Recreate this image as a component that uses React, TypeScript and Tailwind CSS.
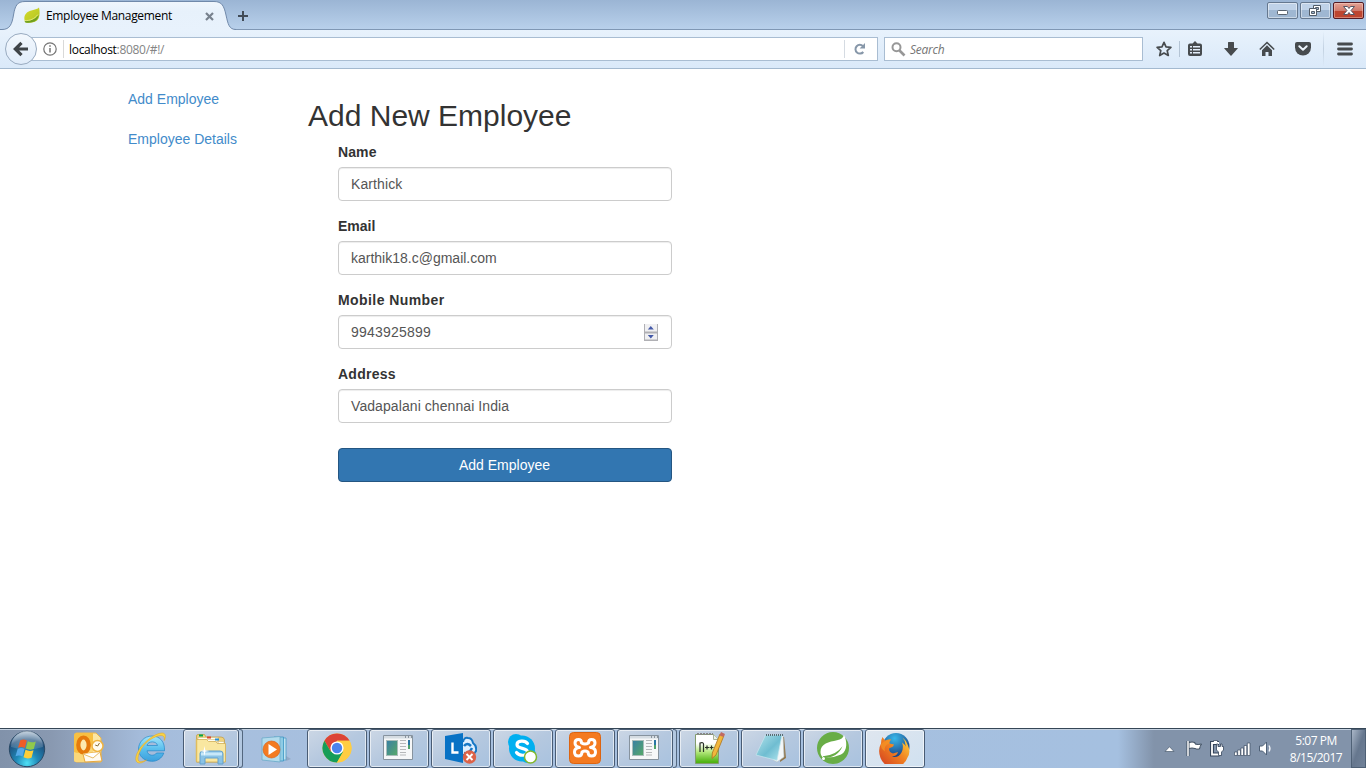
import React from 'react';

const uiFont = "font-['Open_Sans','Noto_Sans',sans-serif]";

function LeafIcon() {
  return (
    <svg width="18" height="18" viewBox="0 0 18 18">
      <defs>
        <linearGradient id="leaf" x1="0" y1="0" x2="1" y2="1">
          <stop offset="0" stopColor="#d3d92b" />
          <stop offset="0.6" stopColor="#c0cd26" />
          <stop offset="1" stopColor="#b0c425" />
        </linearGradient>
      </defs>
      <path d="M16 .5C13.500 3.200 7 3 4 5.500C.8 8.500 .8 12 2.500 15.500C8 16.500 13.500 15.500 15.500 11.500C17 8.500 16.800 4 16 .5Z" fill="url(#leaf)" />
      <path d="M1.500 14C7 14.500 12 12.500 15.600 8C15.500 13 11 16.500 2.500 15.500Z" fill="#6f9f1f" />
      <path d="M1.500 13.600C7 13.800 11.500 12 14.800 7.600" stroke="#e8ee8b" strokeWidth=".8" fill="none" />
    </svg>
  );
}

function WindowButtons() {
  const base = 'h-[17px] rounded-[2px] border border-[#65788f] bg-linear-to-b from-[#bfd2e8] from-50% to-[#9fb7d2] to-50% shadow-[inset_0_0_0_1px_rgba(255,255,255,.45)]';
  return (
    <div className="ml-auto flex gap-0.5 pt-0.5 pr-0.5">
      <div className={'w-[31px] ' + base}>
        <svg width="29" height="15"><rect x="9.500" y="7.500" width="10" height="4" rx="1" fill="#fff" stroke="#59636f" /></svg>
      </div>
      <div className={'w-[31px] ' + base}>
        <svg width="29" height="15" fill="#fff" stroke="#535d69">
          <path d="M12.500 2.500h7v6h-7z" /><path d="M14.500 4.500h3v2h-3z" fill="#9eb4cd" />
          <path d="M8.500 5.500h7v7h-7z" /><path d="M10.500 8.500h3v2h-3z" fill="#9eb4cd" />
        </svg>
      </div>
      <div className="h-[17px] w-[31px] rounded-[2px] border border-[#541b24] bg-linear-to-b from-[#e3a296] from-0% via-[#d07b6d] via-50% to-[#bd4530] to-55% shadow-[inset_0_0_0_1px_rgba(255,225,215,.4)]">
        <svg width="29" height="15"><path d="M9.500 3.500h4l1.500 2 1.500-2h4l-3.500 4 3.500 4h-4l-1.500-2-1.500 2h-4l3.500-4z" fill="#fff" stroke="#565665" /></svg>
      </div>
    </div>
  );
}

function TabStrip() {
  return (
    <div className="flex h-[30px] border-b border-[#7f97b4] bg-linear-to-b from-[#9bb5d4] to-[#b8d0eb]">
      <div className="relative h-[30px] w-[236px] shrink-0">
        <svg className="absolute inset-0" width="236" height="30">
          <defs>
            <linearGradient id="tabfill" x1="0" y1="0" x2="0" y2="1"><stop offset="0" stopColor="#f0f6fc" /><stop offset=".35" stopColor="#e7f1fb" /><stop offset="1" stopColor="#e8f2fc" /></linearGradient>
          </defs>
          <path d="M0 30V29.500H2C10 29.500 12 24 13.500 15C15 6 17 1.500 25 1.500H214C222 1.500 224 6 226 15C228 24 229 29.500 236 29.500V30Z" fill="url(#tabfill)" />
          <path d="M0 29.500H2C10 29.500 12 24 13.500 15C15 6 17 1.500 25 1.500H214C222 1.500 224 6 226 15C228 24 229 29.500 236 29.500" fill="none" stroke="#7089aa" />
        </svg>
        <div className="relative flex h-full items-center pl-[23px]">
          <div className="mt-0.5"><LeafIcon /></div>
          <span className="ml-[5px] mt-px w-[158px] text-[12px] tracking-[-0.33px] whitespace-nowrap text-black">Employee Management</span>
          <svg className="mt-[2px] ml-px" width="9" height="9" viewBox="0 0 9 9"><path d="M1 1l7 7M8 1l-7 7" stroke="#77818d" strokeWidth="2.200" /></svg>
        </div>
      </div>
      <svg className="mt-[10px] ml-[1px]" width="12" height="12"><path d="M6 1v10M1 6h10" stroke="#414b57" strokeWidth="2" /></svg>
      <WindowButtons />
    </div>
  );
}

function ToolIcons() {
  return (
    <div className="flex h-full items-center text-[#474b4e]">
      <svg width="16" height="16" className="ml-[13px]"><path d="M8 1.300l2 4.500 4.900.5-3.700 3.300 1.100 4.900L8 12l-4.300 2.500 1.100-4.900L1.100 6.300 6 5.800z" fill="none" stroke="currentColor" strokeWidth="1.700" strokeLinejoin="round" /></svg>
      <div className="ml-[7px] h-4 w-px bg-[#b4c4d5]" />
      <svg width="16" height="16" className="ml-[7px]">
        <path d="M3 2.500h2.500L8 0l2.500 2.500H13q2 0 2 2V13q0 2-2 2H3q-2 0-2-2V4.500q0-2 2-2z" fill="currentColor" />
        <path d="M3 5h2v1.600H3zM6 5h7v1.600H6zM3 8h2v1.600H3zM6 8h7v1.600H6zM3 11h2v1.600H3zM6 11h7v1.600H6z" fill="#e4eefa" />
      </svg>
      <svg width="16" height="16" className="ml-5"><path d="M5 1.500q0-.5.500-.5h5q.5 0 .5.500V7h3.500q.7 0 .2.600L8.500 14.500q-.5.500-1 0L1.300 7.600Q.8 7 1.500 7H5z" fill="currentColor" /></svg>
      <svg width="16" height="16" className="ml-5"><path d="M.8 8.500L8 1.500l7.200 7" fill="none" stroke="currentColor" strokeWidth="1.500" /><path d="M8 4.300l5 5V15H9.500v-4h-3v4H3V9.300z" fill="currentColor" /></svg>
      <svg width="16" height="16" className="ml-5"><path d="M2 1h12q2 0 2 2v3.500a8 8 0 0 1-16 0V3q0-2 2-2z" fill="currentColor" /><path d="M4.300 5.300L8 8.800l3.700-3.500" fill="none" stroke="#edf4fb" strokeWidth="2" strokeLinecap="round" strokeLinejoin="round" /></svg>
      <div className="ml-[12px] h-[36px] w-px bg-linear-to-b from-transparent via-[#c2d1e1] to-transparent" />
      <svg width="16" height="14" className="ml-[13px]"><path d="M1.500 2h13M1.500 7h13M1.500 12h13" stroke="currentColor" strokeWidth="2.800" strokeLinecap="round" /></svg>
    </div>
  );
}

function Toolbar() {
  return (
    <div className="flex h-[39px] items-center border-b border-[#a3b9cf] bg-linear-to-b from-[#e8f2fc] to-[#dae9f9]">
      <div className="relative z-10 ml-[5px] flex size-8 shrink-0 items-center justify-center rounded-full border border-[#99abc0] bg-linear-to-b from-[#f3f8fd] to-[#e0ecfa]">
        <svg width="16" height="16"><path d="M15 8H3M8.500 1.800L2.300 8l6.200 6.200" fill="none" stroke="#3f4448" strokeWidth="3.200" /></svg>
      </div>
      <div className="-ml-[6px] flex h-6 w-[847px] shrink-0 items-center border border-[#a9bdd2] bg-white">
        <svg width="14" height="14" className="ml-[11px] shrink-0"><circle cx="7" cy="7" r="6.200" fill="none" stroke="#747474" strokeWidth="1.200" /><path d="M7 6v4.500M7 3.300v1.500" stroke="#747474" strokeWidth="1.500" /></svg>
        <div className="ml-[6px] h-[18px] w-px bg-[#d9d9d9]" />
        <span className="ml-[5px] mt-px text-[12px] tracking-[-0.3px] text-black">localhost<span className="text-[#848484]">:8080/#!/</span></span>
        <div className="ml-auto h-[18px] w-px bg-[#d5dbe2]" />
        <svg width="12" height="12" viewBox="0 0 12 12" className="mr-[11px] ml-[9px]"><path d="M9.300 9A4.400 4.400 0 1 1 9 3.100" fill="none" stroke="#8797a9" strokeWidth="2" /><path d="M11 0v5.500H5.600z" fill="#8797a9" /></svg>
      </div>
      <div className="ml-1.5 flex h-6 w-[259px] shrink-0 items-center border border-[#a9bdd2] bg-white">
        <svg width="15" height="15" className="ml-[6px]"><circle cx="5.500" cy="5.300" r="4" fill="none" stroke="#979797" strokeWidth="2" /><path d="M8.500 8.500l5 5" stroke="#979797" strokeWidth="2.600" /></svg>
        <span className="ml-[4px] mt-px text-[12px] tracking-[-0.25px] text-[#757575] italic">Search</span>
      </div>
      <ToolIcons />
    </div>
  );
}

type FieldProps = { label: string; value: string; spinner?: boolean; labelClass?: string; valueClass?: string };

function Field({ label, value, spinner, labelClass = '', valueClass = '' }: FieldProps) {
  return (
    <div className="mb-[15px]">
      <label className={'mb-[5px] block text-[14px] leading-5 font-bold ' + labelClass}>{label}</label>
      <div className="flex h-[34px] items-center justify-between rounded-[4px] border border-[#ccc] px-3 text-[14px] text-[#555] shadow-[inset_0_1px_1px_rgba(0,0,0,.075)]">
        <span className={valueClass}>{value}</span>
        {spinner && (
          <svg width="14" height="17" className="mr-px">
            <path d="M0 0h14v17H0z" fill="#b0b0b4" />
            <path d="M1 0h12v7.500H1zM1 9.500h12v6H1z" fill="#f0f0f2" />
            <path d="M3.800 5.500h6L6.800 2zM3.800 11h6l-3 3.500z" fill="#4459a8" />
          </svg>
        )}
      </div>
    </div>
  );
}

function Page() {
  return (
    <main className="flex h-[659px] bg-white font-['Liberation_Sans',Arial,sans-serif] text-[14px] leading-5 text-[#333]">
      <nav className="ml-[128px] flex w-[180px] flex-col gap-5 pt-5 text-[#428bca]">
        <a>Add Employee</a>
        <a>Employee Details</a>
      </nav>
      <section className="w-[364px]">
        <h2 className="mt-[30px] mb-[10px] text-[30px] leading-[33px]">Add New Employee</h2>
        <form className="pl-[30px]">
          <Field label="Name" value="Karthick" labelClass="tracking-[0.1px]" valueClass="tracking-[0.1px]" />
          <Field label="Email" value="karthik18.c@gmail.com" />
          <Field label="Mobile Number" value="9943925899" spinner labelClass="tracking-[0.42px]" valueClass="tracking-[0.22px]" />
          <Field label="Address" value="Vadapalani chennai India" labelClass="tracking-[0.25px]" valueClass="tracking-[0.08px]" />
          <button type="button" className="mt-[10px] h-[34px] w-full rounded-[4px] border border-[#245682] bg-[#3276b1] pr-px text-white">Add Employee</button>
        </form>
      </section>
    </main>
  );
}

const StartOrb = () => (
  <svg width="40" height="40" viewBox="0 0 40 40">
    <defs>
      <radialGradient id="orb" cx=".5" cy=".9" r=".9"><stop offset="0" stopColor="#4fe0f5" /><stop offset=".35" stopColor="#2089b8" /><stop offset=".75" stopColor="#1f4f7c" /><stop offset="1" stopColor="#7e9cb9" /></radialGradient>
      <linearGradient id="orbShine" x1="0" y1="0" x2="0" y2="1"><stop offset="0" stopColor="#fff" stopOpacity=".55" /><stop offset="1" stopColor="#fff" stopOpacity=".1" /></linearGradient>
    </defs>
    <circle cx="20" cy="20" r="17.700" fill="url(#orb)" stroke="#294966" />
    <path d="M4 18a16 16 0 0 1 32 0Q20 23 4 18z" fill="url(#orbShine)" />
    <path d="M13.300 11.200q3.500-1.700 6.500.3l-2 7.500q-3-2-6.800-.3z" fill="#ee5d27" />
    <path d="M20.800 12.200q4 2 8 .2l-2 7.500q-4 1.700-8-.4z" fill="#90c94c" />
    <path d="M10.700 19.800q4-1.700 6.800.3l-2 7.500q-3-2-7-.4z" fill="#55a9e8" />
    <path d="M18.500 20.800q4 2 8 .4l-2 7.500q-4 1.700-8-.4z" fill="#fdce38" />
  </svg>
);

const Outlook = () => (
  <svg width="32" height="32" viewBox="0 0 32 32" className="-mt-0.5">
    <path d="M3 1h20l5 5v24H3z" fill="#fce7a4" stroke="#eeb649" />
    <path d="M1 3q0-2 2-2h17v29H3q-2 0-2-2z" fill="#f8c042" />
    <path d="M1 20Q10 24 20 12v18H3q-2 0-2-2z" fill="#fbd87a" />
    <ellipse cx="10.500" cy="13" rx="5.200" ry="7.500" fill="#fdeab0" stroke="#e57a0c" strokeWidth="4.200" />
    <path d="M10 22l17-2 2 9-17 1z" fill="#fffaf0" stroke="#e9a83c" /><path d="M10 22l10 4 7-6" fill="#fff" stroke="#e7bb66" />
    <circle cx="24.500" cy="14" r="5.500" fill="#fffbed" stroke="#f0b33f" strokeWidth="1.500" />
    <path d="M26.500 11l-1.800 3-2.500-1" stroke="#8a6a2e" fill="none" />
  </svg>
);

const Explorer = () => (
  <svg width="34" height="32" viewBox="0 0 34 32">
    <path d="M2.500 3q0-1.500 1.500-1.500h6.500L12 4h15q3 0 3.500 3v22h-28z" fill="#efd27c" stroke="#c2a04c" strokeWidth=".8" />
    <path d="M4 4.500h20v6H4zM12 6.500h12v6H12zM20 8.500h10v6H20z" fill="#fffdf0" stroke="#d3bd79" strokeWidth=".6" />
    <rect x="5" y="1.500" width="4" height="2" fill="#00a849" /><rect x="13" y="3.500" width="4" height="2" fill="#dc4930" /><rect x="21" y="5.500" width="4" height="2" fill="#2990d8" />
    <path d="M2.500 6.500h10l2 2h7l2 2h8V29h-29z" fill="#f9e7a0" stroke="#d0ae55" strokeWidth=".8" />
    <path d="M2.500 6.500v22" stroke="#e0bd5c" strokeWidth="1.500" />
    <path d="M6 31V20.500q0-2.500 3-2.500h17q3 0 3 2.500V31h-5v-6H11v6z" fill="#8ac3e6" stroke="#64a1cd" />
    <path d="M7 19.500h21v3H7z" fill="#d2eefb" opacity=".85" />
    <path d="M10.500 13l.8 4.200 4.200.8-4.200.8-.8 4.200-.8-4.200-4.200-.8 4.200-.8z" fill="#fff" />
  </svg>
);

const MediaPlayer = () => (
  <svg width="32" height="32" viewBox="0 0 32 32">
    <path d="M17 5h10v22H17z" fill="#c2e3f1" stroke="#4e9fc9" strokeWidth=".8" /><path d="M15 4h9.500v24H15z" fill="#8fcce5" stroke="#3c96c3" strokeWidth=".8" />
    <path d="M3 5l18-1.500V29L3 27z" fill="#b3dcec" stroke="#6cabc9" strokeWidth=".8" />
    <circle cx="12.500" cy="16.500" r="8.500" fill="#f37b21" stroke="#d95c15" strokeWidth=".6" /><path d="M9.500 11l8.500 5.500L9.500 22z" fill="#fff" />
    <path d="M27 23l5 3-5 2z" fill="#758ba5" opacity=".4" />
  </svg>
);

const Chrome = () => (
  <svg width="30" height="30" viewBox="0 0 30 30" className="-mt-px">
    <circle cx="15" cy="15" r="14.500" fill="#ffcd42" />
    <path d="M2.440 7.750A14.500 14.500 0 0 1 27.560 7.750H15L8.700 18.600z" fill="#dc4437" />
    <path d="M2.440 7.750A14.500 14.500 0 0 0 15 29.500L21.300 18.600 8.700 18.600z" fill="#159d58" />
    <path d="M15 7.750h12.560A14.500 14.500 0 0 1 15 29.500L21.300 18.600z" fill="#ffcd42" />
    <circle cx="15" cy="15" r="6.600" fill="#fff" /><circle cx="15" cy="15" r="5.200" fill="#4a83ed" />
  </svg>
);

const WindowApp = () => (
  <svg width="30" height="26" viewBox="0 0 30 26" className="mr-0.5 -mt-[3px]">
    <defs><linearGradient id="winapp" x1="0" y1="0" x2="1" y2="1"><stop stopColor="#397fa5" /><stop offset="1" stopColor="#57a967" /></linearGradient></defs>
    <path d="M.5 1.500h29v24H.5z" fill="#f6f7f8" stroke="#87939e" /><path d="M1 2h28v2.500H1z" fill="#d5dce2" />
    <path d="M22 3h1M25 3h1M28 3h1" stroke="#3d4b5a" />
    <rect x="3.500" y="6.500" width="11" height="15" fill="url(#winapp)" stroke="#a8bcb9" /><path d="M17 6.500h6M17 9.500h6M17 12.500h6M17 15.500h6M17 18.500h6M17 21h6" stroke="#b6b8ba" />
    <rect x="25" y="6" width="2" height="9" fill="#2875a4" /><path d="M25 11h2v4h-2z" fill="#4fa36a" />
  </svg>
);

const Lync = () => (
  <svg width="32" height="32" viewBox="0 0 32 32" className="-mt-0.5">
    <path d="M18 10q1-5 5-4 4 0 5 5 4 3 3 8l-3 4H18" fill="#dceeff" stroke="#1677c5" strokeWidth="2" />
    <path d="M19 14q3-4 7 0M19 21q5 1 8-5" stroke="#1677c5" strokeWidth="2.500" fill="none" />
    <path d="M0 4l18-3v30L0 27z" fill="#0872c5" /><path d="M7.500 10.500v10h6" fill="none" stroke="#fff" strokeWidth="2.400" />
    <circle cx="24.500" cy="25" r="6.700" fill="#dc6248" /><path d="M21.500 22l6 6m0-6l-6 6" stroke="#fff" strokeWidth="1.900" />
  </svg>
);

const Skype = () => (
  <svg width="32" height="32" viewBox="0 0 32 32">
    <circle cx="9" cy="9" r="8" fill="#00aff0" /><circle cx="21" cy="22" r="8" fill="#00aff0" /><circle cx="15" cy="15.500" r="13" fill="#00aff0" />
    <path d="M20.500 10.500C18 7 10 7.500 10 11.700c0 4.800 10.500 2.500 10.500 7.300 0 4-8 4.500-11 .5" fill="none" stroke="#fff" strokeWidth="3.200" strokeLinecap="round" />
    <circle cx="23.500" cy="24" r="6" fill="#fff" stroke="#82b72c" strokeWidth="1.500" />
  </svg>
);

const Xampp = () => (
  <svg width="32" height="32" viewBox="0 0 32 32" className="-mt-0.5">
    <rect x=".5" y=".5" width="31" height="31" rx="4" fill="#f47a20" stroke="#dc6411" />
    <path d="M10.500 15.500Q6 14.500 6 11q0-3.500 3.500-3.500 3 0 3 3.500 3.500 2 7 0 0-3.500 3-3.500Q26 7.500 26 11q0 3.500-4.500 4.500Q26.500 16 26.500 20t-4 4q-3.500 0-3.500-4-3-2-6 0 0 4-3.500 4-4 0-4-4t5-4.500z" fill="none" stroke="#fff" strokeWidth="3" strokeLinejoin="round" />
  </svg>
);

const Notepadpp = () => (
  <svg width="32" height="34" viewBox="0 0 32 34" className="-mt-px">
    <defs><linearGradient id="npp" x1="0" y1="0" x2="0" y2="1"><stop offset=".3" stopColor="#fff" /><stop offset=".6" stopColor="#b4e87c" /><stop offset=".95" stopColor="#4fb313" /></linearGradient></defs>
    <path d="M2.500 3.500h18l5 5v24h-23z" fill="url(#npp)" stroke="#829c6c" /><path d="M20.500 3.500v5h5" fill="#eef2e8" stroke="#a8b39c" /><path d="M4 3h16" stroke="#888" strokeDasharray="2 1" strokeWidth="2" />
    <path d="M7 21v-9q3.500-1 3.500 1v8M12 16.500h4M14 14.500v4M16.500 16.500h4M18.500 14.500v4" fill="none" stroke="#283126" strokeWidth="1.200" />
    <path d="M27 3l4 1.500L23 24l-4 3.500.3-5.500z" fill="#f2b73c" stroke="#ad7420" strokeWidth=".8" /><path d="M28 1l4 2-1.500 3-3.800-1.500z" fill="#c16961" />
  </svg>
);

const Notepad = () => (
  <svg width="32" height="30" viewBox="0 0 32 30" className="-mt-px">
    <defs><linearGradient id="note" x1="0" y1="0" x2="1" y2="1"><stop stopColor="#b5e3eb" /><stop offset=".55" stopColor="#6fbdd1" /><stop offset="1" stopColor="#b2e6ef" /></linearGradient></defs>
    <path d="M27 4h2l2 21-6 4z" fill="#92774c" /><path d="M25 2h3l1 22-7 5-4-2z" fill="#f4f7f8" stroke="#b0bdc3" strokeWidth=".6" />
    <path d="M10.500 2H27l-5 25.500L1 22z" fill="url(#note)" stroke="#c9e7ee" strokeWidth=".7" /><path d="M11 2h17" stroke="#596b74" strokeWidth="2" strokeDasharray="1 1" />
  </svg>
);

const Spring = () => (
  <svg width="34" height="34" viewBox="0 0 34 34" className="-mt-0.5">
    <circle cx="17" cy="17" r="16" fill="#68ad46" />
    <path d="M28 4c-1 3-3 4.500-7 5.300C13 11 4.500 12.500 4.500 21c0 2.500 1 4 2 5q10 1.500 18.500-2.500C32 20 31 9.500 28 4z" fill="#fff" />
    <path d="M7 25.300q13-1 19.500-10-5 12-19.500 11.700z" fill="#68ad46" /><circle cx="7.500" cy="27.500" r="1.500" fill="#fff" />
  </svg>
);

const Firefox = () => (
  <svg width="32" height="32" viewBox="0 0 32 32" className="-mt-0.5">
    <defs>
      <radialGradient id="globe" cx=".45" cy=".2" r=".8"><stop stopColor="#38b8ea" /><stop offset="1" stopColor="#172d72" /></radialGradient>
      <linearGradient id="fox" x1="1" y1="0" x2="0" y2="1"><stop stopColor="#ffdc42" /><stop offset=".45" stopColor="#f18221" /><stop offset="1" stopColor="#cf3821" /></linearGradient>
    </defs>
    <circle cx="17" cy="14.500" r="13.500" fill="url(#globe)" />
    <path d="M3.500 5l2.500 3.500q3-1.500 6-1-2 2-1.500 4l4.500 1-1 2-4 2q0 4 4 5l5-1.500q-1 4-6 4.500 6 2 9.500-4 2.500-5 .5-10 3 2 3.500 4 .5-5-3-9 4 3 5.500 8 3 7-.5 12a14.300 14.300 0 0 1-27 .5Q-1.500 18 2 11.500q0-4 1.500-6.500z" fill="url(#fox)" />
    <path d="M2 12q3.500-4 10-4.500-2 2-1.500 4Q4.500 13 6 19.500 1 16 2 12z" fill="#f49324" opacity=".75" />
  </svg>
);

const InternetExplorer = () => (
  <svg width="32" height="32" viewBox="0 0 32 32" className="-mt-0.5">
    <defs><linearGradient id="ie" x1="0" y1="0" x2="0" y2="1"><stop stopColor="#a4e6fb" /><stop offset=".5" stopColor="#5cc0ee" /><stop offset="1" stopColor="#3b9fdd" /></linearGradient></defs>
    <path d="M29.500 18.800H12c.7 5.200 7.500 5.700 9.500 2.200h7.300C27 26.500 22 29.500 16.500 29.300 8.500 29 3.500 23.500 3.500 17S9 4 17 4c8.500 0 13 6.500 12.500 14.800zM12 13.500h10.500c-.8-4.800-9.500-4.800-10.500 0z" fill="url(#ie)" stroke="#2488c8" strokeWidth=".7" fillRule="evenodd" />
    <path d="M4.500 20.500C.5 30 4.500 31.500 11.500 28 4 33.800-2 31 2 21.500 6 12 19.500 1 27 1c4 0 4 3.700 2.300 7.500.8-5.500-3-6-8.500-3.700C13.500 7.500 7.500 13.500 4.500 20.500z" fill="#fad344" stroke="#e0a92b" strokeWidth=".6" />
  </svg>
);

function TaskItem({ children, open, stacked, active }: { children: React.ReactNode; open?: boolean; stacked?: boolean; active?: boolean }) {
  return (
    <div className="flex h-[39px] w-[60px] shrink-0">
      <div className={'flex min-w-0 flex-1 items-center justify-center ' + (open ? 'rounded-[3px] border border-[#495c74] bg-linear-to-br shadow-[inset_0_0_0_1px_rgba(255,255,255,.6)] ' : '') + (open ? (active ? 'from-[#dfe6ef] to-[#d0e1f0]' : 'from-[#ccd7e5] via-[#b5c8df] to-[#a8c2df]') : '')}>
        {children}
      </div>
      {stacked && <div className="w-1 rounded-r-[3px] border-y border-r border-[#53677f] bg-[#b3c8e1]" />}
    </div>
  );
}

function Tray() {
  return (
    <div className="ml-auto flex h-full items-center text-white">
      <svg width="11" height="6"><path d="M1 5.500h9L5.500.7z" fill="#fff" stroke="#4b5b6f" strokeWidth=".7" /></svg>
      <svg width="17" height="17" className="ml-[11px]"><path d="M2 1v15" stroke="#3c4c5f" strokeWidth="3" /><path d="M3 2.500q3-1 6 0v1.500q3 1 6.500 0-1.500 2-2 5-3 .5-4.500-.5-3-1-6 0z" fill="#fff" stroke="#3c4c5f" /><path d="M2 1v15" stroke="#fff" strokeWidth="1.500" /></svg>
      <svg width="17" height="17" className="ml-[6px]"><path d="M10 3H3v11.500h7.500" fill="none" stroke="#35455a" strokeWidth="4" /><path d="M4.500.5h4V3h-4z" fill="#fff" stroke="#35455a" strokeWidth=".7" /><path d="M10 3H3v11.500h7.500" fill="none" stroke="#fff" strokeWidth="1.800" /><path d="M7.500 7V4H9v2.500h2.500V4H13v2.500h1.500V10l-2 2v3.500H9.500V12L7.500 10z" fill="#fff" stroke="#35455a" strokeWidth=".8" /></svg>
      <svg width="17" height="14" className="ml-[8px]" fill="#fff" stroke="#3d4e63" strokeWidth=".7"><path d="M.5 10h2.700v3.500H.5zM3.700 8h2.700v5.500H3.700zM6.900 6h2.700v7.500H6.900zM10.100 3.500h2.700v10h-2.700zM13.300 1H16v12.500h-2.700z" /></svg>
      <svg width="15" height="15" className="ml-[7px]"><path d="M1.500 5h3l4-4v13l-4-4h-3z" fill="#fff" stroke="#4e6076" /><path d="M11 4.500q2 3 0 6" stroke="#f2f5f9" strokeWidth="1.300" fill="none" /></svg>
      <div className="ml-[13px] flex w-[60px] flex-col items-center text-[12px] leading-[17px] tracking-[-0.5px] whitespace-nowrap"><span>5:07 PM</span><span>8/15/2017</span></div>
      <div className="ml-[5px] h-full w-[15px] border border-[#4f6176] bg-linear-to-br from-[#aab7c8] via-[#66778e] to-[#718299]" />
    </div>
  );
}

function Taskbar() {
  return (
    <footer className="flex h-10 items-start border-t border-[#354656] bg-[linear-gradient(90deg,#8192aa_0,#8999b1_52px,#a4bbda_140px,#a7bfde_200px,#a5c0e0_1118px,#8293aa_1154px,#8293aa_100%)] shadow-[inset_0_1px_0_#c5d2e1]">
      <div className="flex h-full w-[59px] shrink-0 items-center pl-[7px]"><StartOrb /></div>
      <div className="flex gap-0.5">
        <TaskItem><Outlook /></TaskItem>
        <TaskItem><InternetExplorer /></TaskItem>
        <TaskItem open stacked><Explorer /></TaskItem>
        <TaskItem><MediaPlayer /></TaskItem>
        <TaskItem open><Chrome /></TaskItem>
        <TaskItem open><WindowApp /></TaskItem>
        <TaskItem open><Lync /></TaskItem>
        <TaskItem open><Skype /></TaskItem>
        <TaskItem open><Xampp /></TaskItem>
        <TaskItem open stacked><WindowApp /></TaskItem>
        <TaskItem open><Notepadpp /></TaskItem>
        <TaskItem open><Notepad /></TaskItem>
        <TaskItem open><Spring /></TaskItem>
        <TaskItem open active><Firefox /></TaskItem>
      </div>
      <Tray />
    </footer>
  );
}

export default function App() {
  return (
    <div className={'h-[768px] w-[1366px] overflow-hidden ' + uiFont}>
      <TabStrip />
      <Toolbar />
      <Page />
      <Taskbar />
    </div>
  );
}
